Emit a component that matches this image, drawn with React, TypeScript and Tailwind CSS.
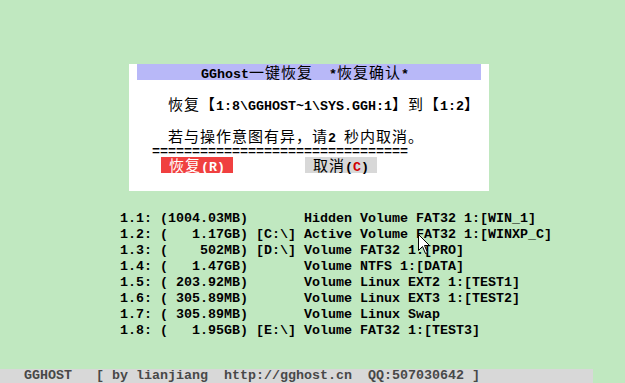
import clsx from "clsx";

// one text line on an 8x16 character grid: ascii = 1 cell, cjk = 2 cells
const Line = ({ s, className, color }: { s: string; className?: string; color?: string }) => {
  const parts = s.match(/[\x00-\x7f]+|[^\x00-\x7f]+/g) ?? [];
  return (
    <div className={clsx("h-4 leading-4 whitespace-pre", color ?? "text-black", className)}>
      {parts.map((p, i) =>
        /^[\x00-\x7f]/.test(p) ? (
          <span key={i} className="font-['Liberation_Mono',monospace] text-[13.333px] leading-4 font-bold">
            {p}
          </span>
        ) : (
          <span key={i} className="font-['Noto_Sans_CJK_SC',sans-serif] text-[15px] tracking-[1px] leading-[14px]">
            {p}
          </span>
        )
      )}
    </div>
  );
};

const rows = [
  "1.1: (1004.03MB)       Hidden Volume FAT32 1:[WIN_1]",
  "1.2: (   1.17GB) [C:\\] Active Volume FAT32 1:[WINXP_C]",
  "1.3: (    502MB) [D:\\] Volume FAT32 1:[PRO]",
  "1.4: (   1.47GB)       Volume NTFS 1:[DATA]",
  "1.5: ( 203.92MB)       Volume Linux EXT2 1:[TEST1]",
  "1.6: ( 305.89MB)       Volume Linux EXT3 1:[TEST2]",
  "1.7: ( 305.89MB)       Volume Linux Swap",
  "1.8: (   1.95GB) [E:\\] Volume FAT32 1:[TEST3]",
];

const App = () => {
  return (
    <div className="relative w-[625px] h-[383px] bg-[#c0e8c0] flex flex-col overflow-hidden">
      {/* confirm dialog */}
      <div className="ml-[129px] mt-[64px] w-[360px] h-[127px] bg-white flex flex-col">
        <div className="ml-2 w-[344px] h-4 bg-[#b8b8f8] pl-16">
          <Line s="GGhost一键恢复  *恢复确认*" />
        </div>
        <Line className="mt-4 pl-[39px]" s="恢复【1:8\GGHOST~1\SYS.GGH:1】到【1:2】" />
        <Line className="mt-4 pl-[39px]" s="若与操作意图有异，请2 秒内取消。" />
        <Line className="pl-[23px] h-[13px] -mt-[3px]" s="================================" />
        <div className="flex mt-[3px]">
          <div className="ml-8 w-[72px] h-4 bg-[#f04040] pl-2">
            <Line color="text-white" s="恢复(R)" />
          </div>
          <div className="ml-[72px] w-[72px] h-4 bg-[#d8d8d8] pl-2 flex">
            <Line s="取消(" />
            <Line color="text-[#d00000]" s="C" />
            <Line s=")" />
          </div>
        </div>
      </div>

      {/* partition list */}
      <div className="ml-[120px] mt-[17px] flex flex-col">
        {rows.map((r) => (
          <Line key={r} s={r} />
        ))}
      </div>

      {/* status bar */}
      <div className="mt-auto w-[593px] h-[14px] bg-[#d8d8d8] pl-6 whitespace-pre font-['Liberation_Mono',monospace] text-[13.333px] leading-[14px] font-bold text-[#484848]">
        GGHOST   [ by lianjiang  http://gghost.cn  QQ:507030642 ]
      </div>

      {/* mouse pointer */}
      <svg className="absolute left-[418px] top-[234px]" width="13" height="21" viewBox="0 0 13 21">
        <path d="M0.5 0.5 L0.5 16.5 L4.5 12.5 L7.5 19.5 L9.5 18.5 L6.5 11.5 L11.5 11.5 Z" fill="white" stroke="black" strokeWidth="1" />
      </svg>
    </div>
  );
};

export default App;
